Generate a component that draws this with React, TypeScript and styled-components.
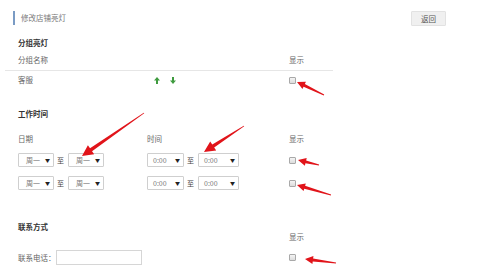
import styled, { createGlobalStyle } from 'styled-components';

const GlobalStyle = createGlobalStyle`
  body {
    margin: 0;
    background: #fff;
    font-family: "Noto Sans CJK SC", "Noto Sans", sans-serif;
  }
`;

// ---- red annotation arrows (drawn over the screenshot) ----
type Pt = [number, number];

const arrowPoints = (tail: Pt, tip: Pt, head = 8, headW = 8, neckW = 3, tailW = 0.8) => {
  const dx = tip[0] - tail[0];
  const dy = tip[1] - tail[1];
  const len = Math.hypot(dx, dy);
  const ux = dx / len;
  const uy = dy / len;
  const nx = -uy;
  const ny = ux;
  const neck: Pt = [tip[0] - ux * head, tip[1] - uy * head];
  const p = (b: Pt, w: number): string => `${b[0] + (nx * w) / 2},${b[1] + (ny * w) / 2}`;
  return [
    p(tail, tailW),
    p(neck, neckW),
    p(neck, headW),
    `${tip[0]},${tip[1]}`,
    p(neck, -headW),
    p(neck, -neckW),
    p(tail, -tailW),
  ].join(' ');
};

const ANNOTATIONS: { tail: Pt; tip: Pt; big?: boolean }[] = [
  { tail: [324, 95], tip: [297, 82] },
  { tail: [144, 113], tip: [82, 156], big: true },
  { tail: [244, 126], tip: [204, 152], big: true },
  { tail: [319, 165], tip: [298, 160] },
  { tail: [331, 195], tip: [297, 185] },
  { tail: [336, 263], tip: [305, 259] },
];

const Overlay = styled.svg`
  position: absolute;
  left: 0;
  top: 0;
  pointer-events: none;
`;

// ---- page ----
const Page = styled.div`
  position: relative;
  width: 500px;
  height: 267px;
  overflow: hidden;
  font-size: 7.5px;
  color: #666;
`;

const Header = styled.div`
  height: 36px;
  display: flex;
  align-items: center;
  justify-content: space-between;
  padding: 0 54px 0 13px;
`;

const Title = styled.div`
  border-left: 2px solid #7a9bc4;
  padding-left: 6px;
  height: 14px;
  line-height: 14px;
  color: #777;
`;

const BackButton = styled.button`
  width: 35px;
  height: 15px;
  padding: 0;
  border: 1px solid #e2e2e2;
  background: #f0f0f0;
  color: #555;
  font-family: inherit;
  font-size: 7.5px;
  border-radius: 1px;
`;

const Content = styled.div`
  margin-left: 5px;
  width: 328px;
`;

const Heading = styled.div<{ $top: number }>`
  margin-top: ${(p) => p.$top}px;
  padding-left: 13px;
  height: 12px;
  line-height: 12px;
  font-weight: 700;
  color: #333;
`;

const Row = styled.div<{ $top?: number; $h: number; $line?: boolean }>`
  display: grid;
  grid-template-columns: 129px 142px 1fr;
  align-items: center;
  margin-top: ${(p) => p.$top ?? 0}px;
  padding-left: 13px;
  height: ${(p) => p.$h}px;
  line-height: 12px;
  box-sizing: content-box;
  ${(p) => (p.$line ? 'padding-bottom: 4px; border-bottom: 1px solid #e6e6e6;' : '')}
`;

const ContactRow = styled(Row)`
  align-items: start;
`;

const Label = styled.span<{ $down?: number }>`
  color: #666;
  margin-top: ${(p) => p.$down ?? 0}px;
`;

const BoldLabel = styled.span`
  font-weight: 700;
  color: #333;
`;

const Cell = styled.div`
  display: flex;
  align-items: center;
`;

const SortArrows = styled.div`
  display: flex;
  gap: 10px;
  margin-left: 7px;
`;

const Check = styled.input.attrs({ type: 'checkbox' })`
  appearance: none;
  margin: 0;
  width: 7px;
  height: 7px;
  border: 1px solid #a9a9a9;
  border-radius: 1px;
  background: linear-gradient(#f4f4f4, #dcdcdc);
  box-sizing: border-box;
`;

const FakeSelect = styled.div<{ $w: number; $pad: number }>`
  width: ${(p) => p.$w}px;
  height: 14px;
  box-sizing: border-box;
  border: 1px solid #cfcfcf;
  border-radius: 1px;
  background: #fff;
  display: flex;
  align-items: center;
  justify-content: space-between;
  padding: 0 3px 0 ${(p) => p.$pad}px;
  font-size: 7px;
  color: #777;
`;

const Caret = styled.span`
  font-size: 5px;
  color: #222;
`;

const To = styled.span`
  margin: 0 4px 0 3px;
  color: #444;
  font-size: 7px;
`;

const PhoneInput = styled.input`
  width: 86px;
  height: 15px;
  box-sizing: border-box;
  border: 1px solid #d6d6d6;
  margin: 0;
  padding: 0 3px;
`;

const Arrow = ({ down }: { down?: boolean }) => (
  <svg width="6" height="7" viewBox="0 0 6 7">
    <polygon
      points={down ? '3,7 6,3.6 4,3.6 4,0 2,0 2,3.6 0,3.6' : '3,0 6,3.4 4,3.4 4,7 2,7 2,3.4 0,3.4'}
      fill="#3f9b3f"
    />
  </svg>
);

const Select = ({ value, w, pad }: { value: string; w: number; pad: number }) => (
  <FakeSelect $w={w} $pad={pad}>
    <span>{value}</span>
    <Caret>▼</Caret>
  </FakeSelect>
);

const TimeRow = ({ top }: { top: number }) => (
  <Row $top={top} $h={14}>
    <Cell>
      <Select value="周一" w={36} pad={7} />
      <To>至</To>
      <Select value="周一" w={36} pad={7} />
    </Cell>
    <Cell>
      <Select value="0:00" w={37} pad={5} />
      <To>至</To>
      <Select value="0:00" w={41} pad={5} />
    </Cell>
    <Cell>
      <Check />
    </Cell>
  </Row>
);

export default function App() {
  return (
    <>
      <GlobalStyle />
      <Page>
        <Header>
          <Title>修改店铺亮灯</Title>
          <BackButton>返回</BackButton>
        </Header>

        <Content>
          <Heading $top={1}>分组亮灯</Heading>
          <Row $top={5} $h={12} $line>
            <Label>分组名称</Label>
            <span />
            <Label>显示</Label>
          </Row>
          <Row $h={18}>
            <Label>客服</Label>
            <SortArrows>
              <Arrow />
              <Arrow down />
            </SortArrows>
            <Cell>
              <Check />
            </Cell>
          </Row>

          <Heading $top={19}>工作时间</Heading>
          <Row $top={13} $h={12}>
            <Label>日期</Label>
            <Label>时间</Label>
            <Label>显示</Label>
          </Row>
          <TimeRow top={8} />
          <TimeRow top={9} />

          <ContactRow $top={31} $h={22}>
            <BoldLabel>联系方式</BoldLabel>
            <span />
            <Label $down={10}>显示</Label>
          </ContactRow>
          <Row $top={7} $h={15}>
            <Cell>
              <Label>联系电话：</Label>
              <PhoneInput />
            </Cell>
            <span />
            <Cell>
              <Check />
            </Cell>
          </Row>
        </Content>

        <Overlay width="500" height="267" viewBox="0 0 500 267">
          {ANNOTATIONS.map((a, i) => (
            <polygon
              key={i}
              points={a.big ? arrowPoints(a.tail, a.tip, 11, 11, 3.5, 0.8) : arrowPoints(a.tail, a.tip, 8, 8, 3, 1)}
              fill="#e1141a"
            />
          ))}
        </Overlay>
      </Page>
    </>
  );
}
